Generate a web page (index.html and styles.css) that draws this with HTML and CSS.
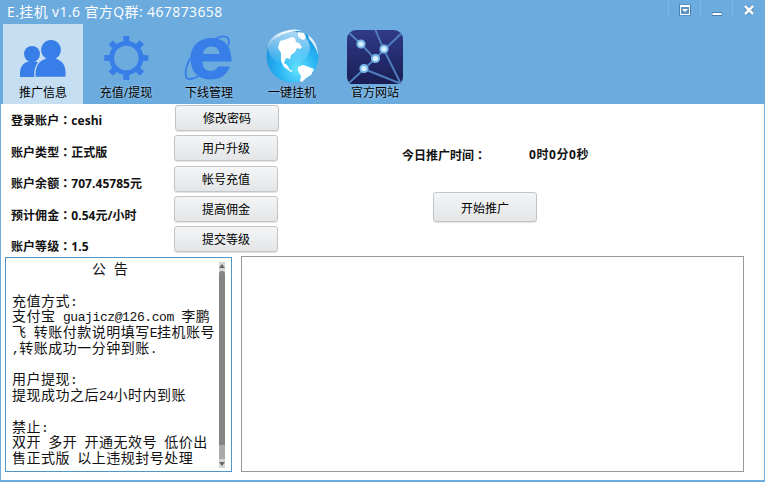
FILE: index.html
```html
<!DOCTYPE html>
<html lang="zh-CN">
<head>
<meta charset="utf-8">
<title>E.挂机 v1.6</title>
<link rel="stylesheet" href="styles.css">
</head>
<body>
<div class="window">
  <header class="header">
    <div class="titlebar">
      <h1 class="title">E.挂机 v1.6 官方Q群: 467873658</h1>
      <div class="controls">
        <span class="control"><svg width="14" height="14" viewBox="0 0 14 14"><path d="M1 1.500h12v11H1z" fill="#477fae"/><path d="M2 2h10v10H2z" fill="#fff"/><path d="M3 4h8v7H3z" fill="#5a94c4"/><path d="M4 6h6L7 9z" fill="#fff"/></svg></span>
        <span class="control"><svg width="14" height="14" viewBox="0 0 14 14"><path d="M2 9h10v4H2z" fill="#477fae"/><path d="M2.500 10h9v2h-9z" fill="#fff"/></svg></span>
        <span class="control"><svg width="14" height="14" viewBox="0 0 14 14"><path d="M3 3l8 8M11 3l-8 8" stroke="#477fae" stroke-width="4"/><path d="M3 3l8 8M11 3l-8 8" stroke="#fff" stroke-width="2.500"/></svg></span>
      </div>
    </div>
    <nav class="tabs">
      <a class="tab active">
        <svg class="icon" width="60" height="60" viewBox="0 0 60 60" fill="#387ee8"><circle cx="19" cy="30" r="8"/><path d="M7 53c-1-11 4-16 12-16s13 5 13 16z"/><path d="M22 53.500c-1-12 4-17 10-19a10.500 10.500 0 1 1 12 0c8 3 10 9 9 19z" stroke="#c5def2" stroke-width="1.300"/><path d="M6 53.300h48v3H6z" fill="#c5def2"/></svg>
        <span>推广信息</span>
      </a>
      <a class="tab">
        <svg class="icon" width="60" height="60" viewBox="0 0 60 60"><g fill="#387ee8"><path id="tooth" d="M27.300 12h6v7h-6z"/><use href="#tooth" transform="rotate(45 30.300 34)"/><use href="#tooth" transform="rotate(90 30.300 34)"/><use href="#tooth" transform="rotate(135 30.300 34)"/><use href="#tooth" transform="rotate(180 30.300 34)"/><use href="#tooth" transform="rotate(225 30.300 34)"/><use href="#tooth" transform="rotate(270 30.300 34)"/><use href="#tooth" transform="rotate(315 30.300 34)"/></g><circle cx="30.300" cy="34" r="14.700" fill="none" stroke="#387ee8" stroke-width="4.800"/></svg>
        <span>充值/提现</span>
      </a>
      <a class="tab">
        <svg class="icon" width="60" height="60" viewBox="0 0 60 60"><path fill="#387ee8" fill-rule="evenodd" d="M52.500 37.500H23.500c0 6 3 9.500 8 9.500 4 0 6-2 7.500-4.500h12C48 51 41 55.500 32 55.500c-13 0-20.500-8-20.500-21C11.500 22 20 14 32 14c13 0 21 8 20.500 23.500zM24 30h16.500c-.5-5-3-7.500-8-7.500S25 25 24 30z"/><path d="M37 14.500c8-4 15-3 12.500 7M11.500 34C5 45 5 56 11 55c4 0 7-2 10-4" fill="none" stroke="#387ee8" stroke-width="1.800"/></svg>
        <span>下线管理</span>
      </a>
      <a class="tab">
        <svg class="icon" width="60" height="60" viewBox="0 0 60 60"><defs><radialGradient id="globe" cx=".6" cy=".75" r=".8"><stop offset="0" stop-color="#67e4ff"/><stop offset=".45" stop-color="#28b5f4"/><stop offset="1" stop-color="#1686d8"/></radialGradient><linearGradient id="shine" x2="0" y2="1"><stop stop-color="#fff" stop-opacity=".65"/><stop offset="1" stop-color="#fff" stop-opacity="0"/></linearGradient></defs><circle cx="30.500" cy="32.500" r="26" fill="url(#globe)"/><ellipse cx="27" cy="24" rx="21" ry="17" fill="url(#shine)"/><g fill="#fff"><path d="M18 17l7-2 5-2 3 1 1 4 3 1 3 4-2 2-3-1-2 4-4 3-1 4-4-1-2 5 3 2 3 5 3 1-2 1-7-5-3-6 0-8-3-5 1-4z"/><path d="M36 8l6 1 2 4-2 3-3-1-3-3zM36 43l5-2 6 2 5 2-3 6-5 3-4 4-2-1 1-5-3-5z"/></g><path d="M11 16C20 5 33 4 39 7 28 7 20 9 11 16zM46 11c6 4 10 11 10 20-2-7-5-12-9-16z" fill="#fff" opacity=".85"/></svg>
        <span>一键挂机</span>
      </a>
      <a class="tab">
        <svg class="icon" width="60" height="60" viewBox="0 0 60 60"><defs><linearGradient id="night" x2="0" y2="1"><stop stop-color="#303b88"/><stop offset="1" stop-color="#191c51"/></linearGradient><clipPath id="tile"><rect x="2" y="6" width="56" height="56" rx="9"/></clipPath></defs><g clip-path="url(#tile)"><path fill="url(#night)" d="M2 6h56v57H2z"/><path d="M1 6l15 14 14 15 9-9L60 6M30 5l9 21 18 36M3 60l16-15 11-10M19 45l40 16" fill="none" stroke="#4f80bf" stroke-width="1.900"/></g><g fill="#d8efff" stroke="#79b7ea" stroke-width="2"><circle cx="16" cy="20" r="3.600"/><circle cx="39" cy="25" r="3.600"/><circle cx="30.500" cy="34.500" r="3.600"/><circle cx="19" cy="44.500" r="3.600"/></g></svg>
        <span>官方网站</span>
      </a>
    </nav>
  </header>
  <main class="main">
    <section class="upper">
      <div class="labels">
        <div>登录账户<i>：</i>ceshi</div>
        <div>账户类型<i>：</i>正式版</div>
        <div>账户余额<i>：</i>707.45785元</div>
        <div>预计佣金<i>：</i>0.54元/小时</div>
        <div>账户等级<i>：</i>1.5</div>
      </div>
      <div class="actions">
        <button class="btn first">修改密码</button>
        <button class="btn">用户升级</button>
        <button class="btn third">帐号充值</button>
        <button class="btn">提高佣金</button>
        <button class="btn">提交等级</button>
      </div>
      <div class="promo">
        <div class="timer"><span class="timer-label">今日推广时间<i>：</i></span><span class="timer-value">0时0分0秒</span></div>
        <button class="btn start">开始推广</button>
      </div>
    </section>
    <section class="lower">
      <div class="notice">
        <div class="notice-text">
          <p class="heading">公<b> </b>告</p>
          <p></p>
          <p>充值方式<b>:</b></p>
          <p>支付宝<b class="mail"> guajicz@126.com </b>李鹏</p>
          <p>飞<b> </b>转账付款说明填写<b>E</b>挂机账号</p>
          <p><b>,</b>转账成功一分钟到账<b>.</b></p>
          <p></p>
          <p>用户提现<b>:</b></p>
          <p>提现成功之后<b>24</b>小时内到账</p>
          <p></p>
          <p>禁止<b>:</b></p>
          <p>双开<b> </b>多开<b> </b>开通无效号<b> </b>低价出</p>
          <p>售正式版<b> </b>以上违规封号处理</p>
        </div>
        <div class="scroll"><svg width="6" height="9"><path d="M0 6l3-4 3 4z" fill="#666"/></svg><div class="thumb"></div><div class="track"></div><svg width="6" height="9"><path d="M0 3h6L3 7z" fill="#666"/></svg></div>
      </div>
      <div class="log"></div>
    </section>
  </main>
</div>
</body>
</html>
```
FILE: styles.css
```css
* { box-sizing: border-box; }
body { margin: 0; font-family: "Open Sans", "Noto Sans CJK SC", sans-serif; color: #000; }
i { font-style: normal; font-family: "Noto Sans CJK TC", sans-serif; font-feature-settings: "locl" 0; }
.window { width: 765px; height: 482px; overflow: hidden; background: #fff; border: 1px solid #6babde; border-width: 0 1px 2px; }
.header { height: 104px; margin: 0 -1px; background: #6babde; }
.titlebar { height: 24px; display: flex; justify-content: space-between; padding-left: 7px; }
.title { margin: 0; font-size: 14px; font-weight: 400; line-height: 23px; color: #fff; white-space: nowrap; letter-spacing: .4px; }
.controls { display: flex; height: 17px; padding-right: 1px; }
.control { width: 32px; border-left: 1px solid #7eb7e4; display: flex; justify-content: center; align-items: center; padding-top: 3px; }
.tabs { display: flex; gap: 3px; padding-left: 3px; }
.tab { width: 80px; height: 80px; display: flex; flex-direction: column; align-items: center; font-size: 12px; line-height: 17px; }
.tab .icon { display: block; flex: none; }
.tab span { text-shadow: 0 0 3px #b6d8f0; white-space: nowrap; }
.active { background: #c5def2; }
.main { height: 376px; }
.upper { height: 152px; display: flex; }
.labels { width: 173px; padding: 0 0 0 10px; font-size: 12px; font-weight: 700; color: #111; white-space: nowrap; letter-spacing: .05px; }
.labels div { height: 31.5px; line-height: 31px; }
.actions { width: 106px; padding-top: 1px; display: flex; flex-direction: column; gap: 4px; }
.btn { width: 104px; height: 26px; flex: none; padding: 0; border: 1px solid #c1c5c8; border-radius: 3px; background: linear-gradient(#f4f5f6, #e3e5e7); box-shadow: 0 1px 1px #e3e3e3; font: 12px/22px "Noto Sans CJK SC", sans-serif; color: #000; }
.first { margin-left: 1px; }
.third { margin-top: 1px; }
.promo { padding: 42px 0 0 122px; font-size: 12px; font-weight: 700; color: #111; }
.timer { display: flex; line-height: 17px; }
.timer-label { width: 127px; }
.timer-value { letter-spacing: .6px; }
.start { height: 30px; margin: 28px 0 0 31px; line-height: 27px; }
.lower { display: flex; gap: 9px; padding: 0 0 0 4px; }
.notice { width: 227px; height: 215px; margin-top: 1px; padding: 3px 6px 0 6px; border: 1px solid #5097c8; display: flex; justify-content: space-between; }
.notice-text { width: 206px; font-family: "Noto Sans CJK SC", sans-serif; font-size: 14px; letter-spacing: .5px; color: #111; }
.notice-text p { margin: 0; height: 15.75px; line-height: 15.75px; white-space: pre; }
.notice-text b { font-family: "Liberation Mono", monospace; font-size: 13px; font-weight: 400; letter-spacing: -.55px; }
.notice-text .mail { letter-spacing: -.4px; }
.notice-text .heading { padding-left: 80px; }
.scroll { width: 6px; height: 206px; margin-top: 1px; display: flex; flex-direction: column; background: #d5d5d5; }
.scroll svg { display: block; flex: none; }
.thumb { height: 174px; background: #858585; border-radius: 3px 3px 0 0; }
.track { flex: 1; background: #aaa; }
.log { width: 503px; height: 216px; border: 1px solid #999; }
```
